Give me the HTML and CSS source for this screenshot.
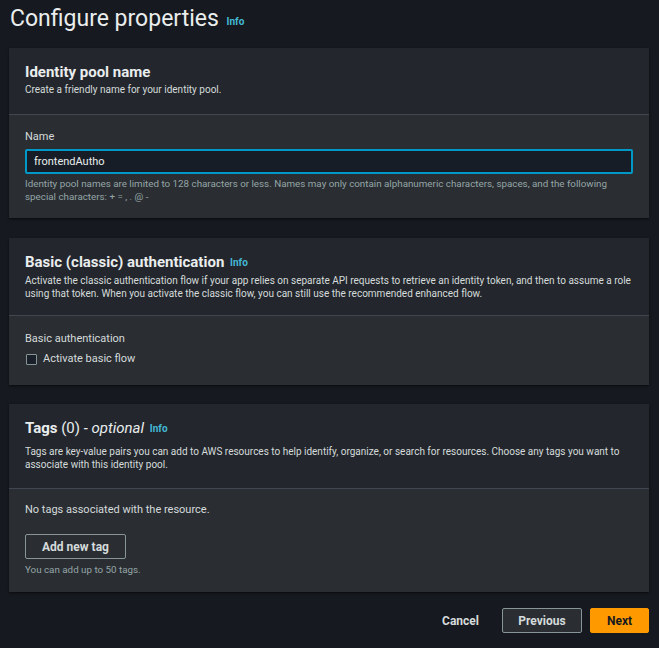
FILE: index.html
```html
<!DOCTYPE html>
<html lang="en">
<head>
<meta charset="utf-8">
<title>Configure properties</title>
<link rel="stylesheet" href="styles.css">
</head>
<body>
<div class="page">
  <h1 class="page-title">Configure properties <a class="info" href="#">Info</a></h1>

  <section class="panel">
    <div class="panel-header header-name">
      <h2 class="panel-title">Identity pool name</h2>
      <p class="panel-desc">Create a friendly name for your identity pool.</p>
    </div>
    <div class="panel-body body-name">
      <label class="field-label" for="pool">Name</label>
      <input id="pool" class="text-input" type="text" value="frontendAutho">
      <p class="hint">Identity pool names are limited to 128 characters or less. Names may only contain alphanumeric characters, spaces, and the following special characters: + = , . @ -</p>
    </div>
  </section>

  <section class="panel panel-basic">
    <div class="panel-header header-basic">
      <h2 class="panel-title">Basic (classic) authentication <a class="info" href="#">Info</a></h2>
      <p class="panel-desc">Activate the classic authentication flow if your app relies on separate API requests to retrieve an identity token, and then to assume a role using that token. When you activate the classic flow, you can still use the recommended enhanced flow.</p>
    </div>
    <div class="panel-body body-basic">
      <div class="field-label">Basic authentication</div>
      <label class="checkbox-row"><span class="checkbox"></span><span>Activate basic flow</span></label>
    </div>
  </section>

  <section class="panel">
    <div class="panel-header header-tags">
      <h2 class="panel-title">Tags <span class="count">(0)</span> <span class="optional">- optional</span> <a class="info" href="#">Info</a></h2>
      <p class="panel-desc">Tags are key-value pairs you can add to AWS resources to help identify, organize, or search for resources. Choose any tags you want to associate with this identity pool.</p>
    </div>
    <div class="panel-body body-tags">
      <p class="empty">No tags associated with the resource.</p>
      <button class="btn btn-normal btn-add" type="button">Add new tag</button>
      <p class="hint">You can add up to 50 tags.</p>
    </div>
  </section>

  <div class="actions">
    <button class="btn btn-link" type="button">Cancel</button>
    <button class="btn btn-normal btn-prev" type="button">Previous</button>
    <button class="btn btn-primary" type="button">Next</button>
  </div>
</div>
</body>
</html>
```

FILE: styles.css
```css
* { box-sizing: border-box; }
html, body { margin: 0; padding: 0; }
body {
  background: #16191f;
  color: #d5dbdb;
  font-family: Roboto, "Noto Sans", sans-serif;
  font-size: 11px;
  line-height: 13px;
}
.page {
  padding: 0 10px 0 9px;
}
.page-title {
  margin: 0;
  padding: 4px 0 0 1px;
  height: 48px;
  font-size: 23px;
  line-height: 30px;
  font-weight: 400;
  color: #eaeded;
}
.info {
  font-size: 10px;
  font-weight: 700;
  color: #44b9d6;
  text-decoration: none;
  margin-left: 2px;
  vertical-align: 1px;
}
.panel {
  background: #2a2e33;
  box-shadow: 0 1px 2px rgba(0,0,0,0.6);
  margin-bottom: 20px;
}
.panel-basic { margin-bottom: 19px; }
.panel-header {
  background: #23272d;
  padding: 14px 16px 17px;
  border-bottom: 1px solid #414750;
}
.panel-title {
  margin: 0;
  font-size: 15px;
  line-height: 20px;
  font-weight: 700;
  color: #eaeded;
}
.count { font-weight: 400; }
.optional { font-weight: 400; font-style: italic; }
.panel-desc {
  margin: 1px 0 0;
  font-size: 10px;
  line-height: 13px;
}
.header-name { padding: 14px 16px 18px; }
.header-basic { padding: 14px 16px 15px; }
.header-tags { padding: 14px 16px 17px; }
.header-tags .panel-desc { margin-top: 6px; }
.panel-body {
  padding: 13px 16px 16px;
}
.field-label {
  display: block;
  font-size: 11px;
  line-height: 14px;
  margin-bottom: 5px;
}
.text-input {
  display: block;
  width: 100%;
  height: 25px;
  background: #161d26;
  border: 2px solid #0099c7;
  border-radius: 2px;
  color: #eaeded;
  font-family: inherit;
  font-size: 11px;
  padding: 0 7px;
  outline: none;
}
.hint {
  margin: 3px 0 0;
  font-size: 9.8px;
  line-height: 13px;
  color: #95a5a6;
}
.body-name { padding: 15px 16px 15px; }
.body-basic { padding: 16px 16px 19px; }
.checkbox-row {
  display: flex;
  align-items: center;
  gap: 6px;
  margin-top: 6px;
  font-size: 11px;
  line-height: 14px;
}
.checkbox {
  width: 11px;
  height: 11px;
  border: 1px solid #879596;
  border-radius: 1px;
  background: #1a2029;
  margin-left: 1px;
}
.body-tags { padding: 14px 16px 16px; }
.empty { margin: 0 0 17px; font-size: 11px; line-height: 14px; }
.btn {
  display: block;
  font-family: inherit;
  font-size: 12px;
  font-weight: 700;
  height: 25px;
  padding: 0 16px;
  border-radius: 2px;
  cursor: pointer;
}
.btn-normal {
  background: #2a2e33;
  color: #d5dbdb;
  border: 1px solid #879596;
}
.btn-add { width: 101px; padding: 0; }
.body-tags .hint { margin-top: 4px; }
.actions {
  display: flex;
  justify-content: flex-end;
  align-items: center;
  gap: 8px;
  margin-top: -4px;
}
.btn-link {
  background: none;
  border: none;
  color: #d5dbdb;
  padding: 0 15px 0 20px;
}
.btn-prev { width: 80px; padding: 0; }
.btn-primary {
  background: #ff9900;
  border: 1px solid #ff9900;
  color: #16191f;
  width: 59px;
  padding: 0;
}
```
